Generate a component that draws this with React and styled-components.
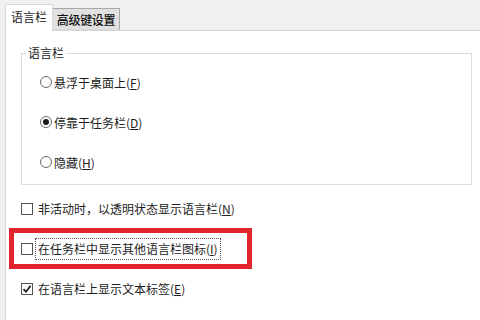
import React from "react"
import styled, { createGlobalStyle } from "styled-components"

const Global = createGlobalStyle`
    html, body {
        margin: 0;
        padding: 0;
        background: #f0f0f0;
    }
    body {
        width: 480px;
        height: 320px;
        overflow: hidden;
        font-family: "Noto Sans CJK SC", "Noto Sans", sans-serif;
        font-size: 12px;
        color: #1e1e1e;
    }
`

const Window = styled.div`
    display: flex;
    flex-direction: column;
    width: 480px;
    height: 320px;
`

const TabStrip = styled.div`
    display: flex;
    align-items: flex-end;
    height: 30px;
    padding-left: 5px;
    box-sizing: border-box;
    position: relative;
    z-index: 1;
`

const Tab = styled.div`
    display: flex;
    align-items: center;
    justify-content: center;
    box-sizing: border-box;
    height: ${p => p.$active ? "27px" : "22px"};
    width: ${p => p.$active ? "48px" : "67px"};
    margin-bottom: ${p => p.$active ? "-1px" : "0"};
    background: ${p => p.$active ? "#ffffff" : "#e1e1e1"};
    border: 1px solid ${p => p.$active ? "#d9d9d9" : "#a8a8a8"};
    border-bottom: ${p => p.$active ? "none" : "1px solid #d9d9d9"};
    border-left: ${p => p.$active ? "1px solid #d9d9d9" : "none"};
    color: ${p => p.$active ? "#1e1e1e" : "#111"};
    font-weight: ${p => p.$active ? "normal" : "500"};
    padding-bottom: ${p => p.$active ? "3px" : "0"};
    letter-spacing: ${p => p.$active ? "0" : "-0.3px"};
`

const Panel = styled.div`
    flex: 1;
    margin-left: 5px;
    background: #fff;
    border-top: 1px solid #d4d4d4;
    border-left: 1px solid #d9d9d9;
    padding: 14px 0 0 15px;
    display: flex;
    flex-direction: column;
`

const Group = styled.fieldset`
    width: 451px;
    box-sizing: border-box;
    margin: 0;
    padding: 1px 0 2px 0;
    border: 1px solid #dcdcdc;
    display: flex;
    flex-direction: column;
`

const Legend = styled.legend`
    margin-left: 4px;
    padding: 0 2px;
    line-height: 16px;
`

const RadioRow = styled.label`
    display: flex;
    align-items: center;
    height: 40px;
    padding-left: 18px;
    gap: 2px;
`

const RadioDot = styled.span`
    width: 12px;
    height: 12px;
    box-sizing: border-box;
    border-radius: 50%;
    border: 1px solid #6a6a6a;
    background: #fff;
    display: flex;
    align-items: center;
    justify-content: center;
    &::after {
        content: "";
        width: 6px;
        height: 6px;
        border-radius: 50%;
        background: #1a1a1a;
        display: ${p => p.$checked ? "block" : "none"};
    }
`

const Options = styled.div`
    display: flex;
    flex-direction: column;
    margin-top: 4px;
`

const CheckRow = styled.label`
    position: relative;
    display: flex;
    align-items: center;
    height: 40px;
    gap: 2px;
`

const Box = styled.span`
    width: 12px;
    height: 12px;
    box-sizing: border-box;
    border: 1px solid #555;
    background: #fff;
    display: flex;
    align-items: center;
    justify-content: center;
`

const Label = styled.span`
    padding: 1px 2px;
    line-height: 18px;
    border: 1px ${p => p.$focus ? "dotted #555" : "solid transparent"};
`

// red annotation frame drawn over the second option
const Highlight = styled.span`
    position: absolute;
    left: -12px;
    top: -1px;
    width: 243px;
    height: 41px;
    box-sizing: border-box;
    border: 5px solid #e0262c;
    pointer-events: none;
`

const Check = () => (
    <svg width="10" height="10" viewBox="0 0 10 10">
        <path d="M1.5 5.2 L4 7.8 L8.6 1.8" fill="none" stroke="#1a1a1a" strokeWidth="1.7" />
    </svg>
)

export default function App() {
    return (
        <Window>
            <Global />
            <TabStrip>
                <Tab $active>语言栏</Tab>
                <Tab>高级键设置</Tab>
            </TabStrip>
            <Panel>
                <Group>
                    <Legend>语言栏</Legend>
                    <RadioRow>
                        <RadioDot />
                        <span>悬浮于桌面上(<u>F</u>)</span>
                    </RadioRow>
                    <RadioRow>
                        <RadioDot $checked />
                        <span>停靠于任务栏(<u>D</u>)</span>
                    </RadioRow>
                    <RadioRow>
                        <RadioDot />
                        <span>隐藏(<u>H</u>)</span>
                    </RadioRow>
                </Group>
                <Options>
                    <CheckRow>
                        <Box />
                        <Label>非活动时，以透明状态显示语言栏(<u>N</u>)</Label>
                    </CheckRow>
                    <CheckRow>
                        <Box />
                        <Label $focus>在任务栏中显示其他语言栏图标(<u>I</u>)</Label>
                        <Highlight />
                    </CheckRow>
                    <CheckRow>
                        <Box><Check /></Box>
                        <Label>在语言栏上显示文本标签(<u>E</u>)</Label>
                    </CheckRow>
                </Options>
            </Panel>
        </Window>
    )
}
